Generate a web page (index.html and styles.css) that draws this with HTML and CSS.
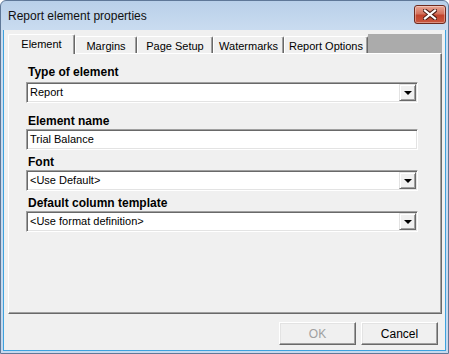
FILE: index.html
```html
<!DOCTYPE html>
<html lang="en">
<head>
  <meta charset="UTF-8" />
  <title>Report element properties</title>
  <link rel="stylesheet" href="styles.css">
</head>
<body>
  <div class="window">
    <div class="titlebar">
      <span class="title">Report element properties</span>
      <button class="close" title="Close">
        <svg width="14" height="11" viewBox="0 0 14 11">
          <path d="M2 1.5 L12 9.5 M12 1.5 L2 9.5" stroke="#4a1c14" stroke-width="4.2" stroke-linecap="square" />
          <path d="M2 1.5 L12 9.5 M12 1.5 L2 9.5" stroke="#fff" stroke-width="2.2" stroke-linecap="square" />
        </svg>
      </button>
    </div>

    <div class="client">
      <!-- tab strip -->
      <div class="tabs">
        <div class="tab active tab-element">Element</div>
        <div class="tab tab-margins">Margins</div>
        <div class="tab tab-page">Page Setup</div>
        <div class="tab tab-water">Watermarks</div>
        <div class="tab tab-options">Report Options</div>
        <div class="tab-fill"></div>
      </div>

      <div class="panel">
        <div class="field field-first">
          <label>Type of element</label>
          <div class="box combo">
            <span class="value">Report</span>
            <span class="drop"><i></i></span>
          </div>
        </div>
        <div class="field field-name">
          <label>Element name</label>
          <div class="box">
            <span class="value">Trial Balance</span>
          </div>
        </div>
        <div class="field">
          <label>Font</label>
          <div class="box combo">
            <span class="value">&lt;Use Default&gt;</span>
            <span class="drop"><i></i></span>
          </div>
        </div>
        <div class="field">
          <label>Default column template</label>
          <div class="box combo">
            <span class="value">&lt;Use format definition&gt;</span>
            <span class="drop"><i></i></span>
          </div>
        </div>
      </div>

      <div class="buttons">
        <button class="btn" disabled>OK</button>
        <button class="btn">Cancel</button>
      </div>
    </div>
  </div>
</body>
</html>
```

FILE: styles.css
```css
body {
  margin: 0;
  font-family: "Liberation Sans", Arial, sans-serif;
  font-size: 11px;
  color: #000;
  background: #fff;
}
.window {
  width: 449px;
  height: 354px;
  box-sizing: border-box;
  border: 1px solid #5f7898;
  border-radius: 6px 6px 0 0;
  padding: 0 2px 2px;
  background: linear-gradient(#b9d0e9, #cadcf0 30px, #c6d9ee);
  display: flex;
  flex-direction: column;
}
.titlebar {
  height: 29px;
  display: flex;
  align-items: center;
  justify-content: space-between;
  padding-left: 5px;
}
.title {
  font-size: 12px;
  color: #101010;
  margin-top: 1px;
}
.close {
  width: 32px;
  height: 19px;
  margin: -3px 0 0 0;
  padding: 0;
  border: 1px solid #6e2a1e;
  border-radius: 3px;
  background: linear-gradient(#e8a593, #d4735e 45%, #c2432c 55%, #c9573f);
  box-shadow: inset 0 0 0 1px rgba(255, 255, 255, 0.35);
  display: flex;
  align-items: center;
  justify-content: center;
}
.client {
  flex: 1;
  background: #f0f0f0;
  border: 1px solid #3ea2de;
  border-top: none;
  padding: 4px 3px 0 4px;
  display: flex;
  flex-direction: column;
}

/* tabs */
.tabs {
  display: flex;
  height: 19px;
  align-items: flex-end;
  position: relative;
  z-index: 1;
}
.tab {
  box-sizing: border-box;
  height: 17px;
  border-top: 1px solid #fff;
  border-left: 1px solid #fff;
  border-right: 1px solid #696969;
  box-shadow: inset -1px 0 #a0a0a0;
  border-radius: 2px 2px 0 0;
  text-align: center;
  font-size: 11px;
  line-height: 16px;
  padding-top: 1px;
  background: #f0f0f0;
}
.tab.active {
  height: 20px;
  margin-bottom: -1px;
  line-height: 18px;
  padding-top: 0;
}
.tab-element { width: 67px; }
.tab-margins { width: 62px; }
.tab-page { width: 76px; }
.tab-water { width: 71px; }
.tab-options { width: 84px; }
.tab-fill {
  flex: 1;
  height: 19px;
  background: #ababab;
}

.panel {
  height: 261px;
  box-sizing: border-box;
  border-top: 1px solid #fff;
  border-left: 1px solid #fff;
  border-right: 1px solid #696969;
  border-bottom: 1px solid #696969;
  box-shadow: inset -1px -1px #a0a0a0;
  padding: 11px 0 0 17px;
}
.field {
  width: 392px;
  margin-top: 5px;
}
.field-first { margin-top: 0; }
.field-name { margin-top: 11px; }
.field label {
  display: block;
  font-weight: bold;
  font-size: 12px;
  line-height: 14px;
  padding-left: 2px;
  margin-bottom: 1px;
}
.field-first label { margin-bottom: 3px; }
.box {
  height: 21px;
  box-sizing: border-box;
  border: 1px solid;
  border-color: #a0a0a0 #fff #fff #a0a0a0;
  box-shadow: inset 1px 1px #696969, inset -1px -1px #e3e3e3;
  background: #fff;
  display: flex;
  align-items: center;
  padding: 1px 1px 1px 3px;
}
.value {
  flex: 1;
  line-height: 17px;
}
.drop {
  width: 17px;
  height: 17px;
  box-sizing: border-box;
  background: #f0f0f0;
  border-top: 1px solid #e3e3e3;
  border-left: 1px solid #e3e3e3;
  border-right: 1px solid #696969;
  border-bottom: 1px solid #696969;
  box-shadow: inset 1px 1px #fff, inset -1px -1px #a0a0a0;
  display: flex;
  align-items: center;
  justify-content: center;
}
.drop i {
  width: 0;
  height: 0;
  border-left: 4px solid transparent;
  border-right: 4px solid transparent;
  border-top: 4px solid #000;
  margin-top: 1px;
}

/* bottom buttons */
.buttons {
  display: flex;
  justify-content: flex-end;
  gap: 5px;
  padding: 8px 4px 0 0;
}
.btn {
  width: 77px;
  height: 23px;
  font-family: "Liberation Sans", Arial, sans-serif;
  font-size: 12px;
  background: #f0f0f0;
  border: 1px solid;
  border-color: #fff #696969 #696969 #fff;
  box-shadow: inset -1px -1px #a0a0a0, inset 1px 1px #e3e3e3;
  padding: 0;
  color: #000;
}
.btn:disabled {
  color: #a0a0a0;
}
```
